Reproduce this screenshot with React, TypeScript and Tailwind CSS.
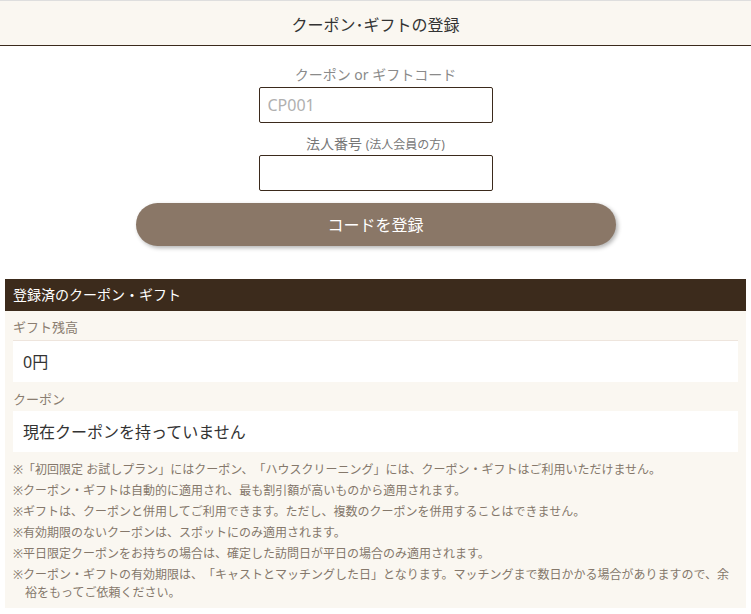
import { useState } from "react";

const notes = [
  "※「初回限定 お試しプラン」にはクーポン、「ハウスクリーニング」には、クーポン・ギフトはご利用いただけません。",
  "※クーポン・ギフトは自動的に適用され、最も割引額が高いものから適用されます。",
  "※ギフトは、クーポンと併用してご利用できます。ただし、複数のクーポンを併用することはできません。",
  "※有効期限のないクーポンは、スポットにのみ適用されます。",
  "※平日限定クーポンをお持ちの場合は、確定した訪問日が平日の場合のみ適用されます。",
  "※クーポン・ギフトの有効期限は、「キャストとマッチングした日」となります。マッチングまで数日かかる場合がありますので、余裕をもってご依頼ください。",
];

export default function App() {
  const [code, setCode] = useState("");
  const [corpNo, setCorpNo] = useState("");

  return (
    <div className="min-h-[614px] bg-white font-['Noto_Sans','Noto_Sans_CJK_JP',sans-serif] text-[#333] [text-spacing-trim:space-all]">
      <header className="flex h-[46px] items-center justify-center border-t border-b border-t-[#dedede] border-b-[#3b2a1c] bg-[#faf7f1] pt-[3px] text-[16px] leading-[20px]">
        クーポン･ギフトの登録
      </header>

      <form
        className="flex flex-col items-center pt-[19px]"
        onSubmit={(e) => e.preventDefault()}
      >
        <label
          htmlFor="code"
          className="text-[14px] leading-[20px] text-[#8a8a8a]"
        >
          クーポン or ギフトコード
        </label>
        <input
          id="code"
          value={code}
          onChange={(e) => setCode(e.target.value)}
          placeholder="CP001"
          className="mt-[2px] h-[36px] w-[234px] rounded-[2px] border border-[#3b2a1c] px-[8px] text-[16px] placeholder:text-[#b0b0b0] focus:outline-none"
        />

        <label
          htmlFor="corp"
          className="mt-[11px] text-[14px] leading-[20px] text-[#777]"
        >
          法人番号 <span className="text-[12px]">(法人会員の方)</span>
        </label>
        <input
          id="corp"
          value={corpNo}
          onChange={(e) => setCorpNo(e.target.value)}
          className="h-[36px] w-[234px] rounded-[2px] border border-[#3b2a1c] px-[8px] text-[16px] focus:outline-none"
        />

        <button
          type="submit"
          className="mt-[12px] h-[43px] w-[480px] rounded-full bg-[#8a7767] text-[16px] text-white shadow-[2px_2px_4px_rgba(0,0,0,0.3)]"
        >
          コードを登録
        </button>
      </form>

      <section className="mx-[5px] mt-[33px] bg-[#faf7f1]">
        <h2 className="flex h-[32px] items-center bg-[#3c2b1c] px-[8px] text-[14px] leading-[20px] text-white">
          登録済のクーポン・ギフト
        </h2>
        <div className="px-[8px] pt-[6px] pb-[6px]">
          <p className="text-[13px] leading-[20px] text-[#8a7d70]">ギフト残高</p>
          <div className="mt-[3px] flex h-[42px] items-center border-t border-[#eee5dd] bg-white px-[10px] text-[16px]">
            0円
          </div>
          <p className="mt-[7px] text-[13px] leading-[20px] text-[#8a7d70]">クーポン</p>
          <div className="mt-[2px] flex h-[41px] items-center bg-white px-[10px] text-[16px]">
            現在クーポンを持っていません
          </div>
          <ul className="mt-[9px] space-y-[3px] text-[12px] leading-[18px] text-[#85786b]">
            {notes.map((note) => (
              <li key={note} className="pl-[1em] -indent-[1em]">
                {note}
              </li>
            ))}
          </ul>
        </div>
      </section>
    </div>
  );
}
